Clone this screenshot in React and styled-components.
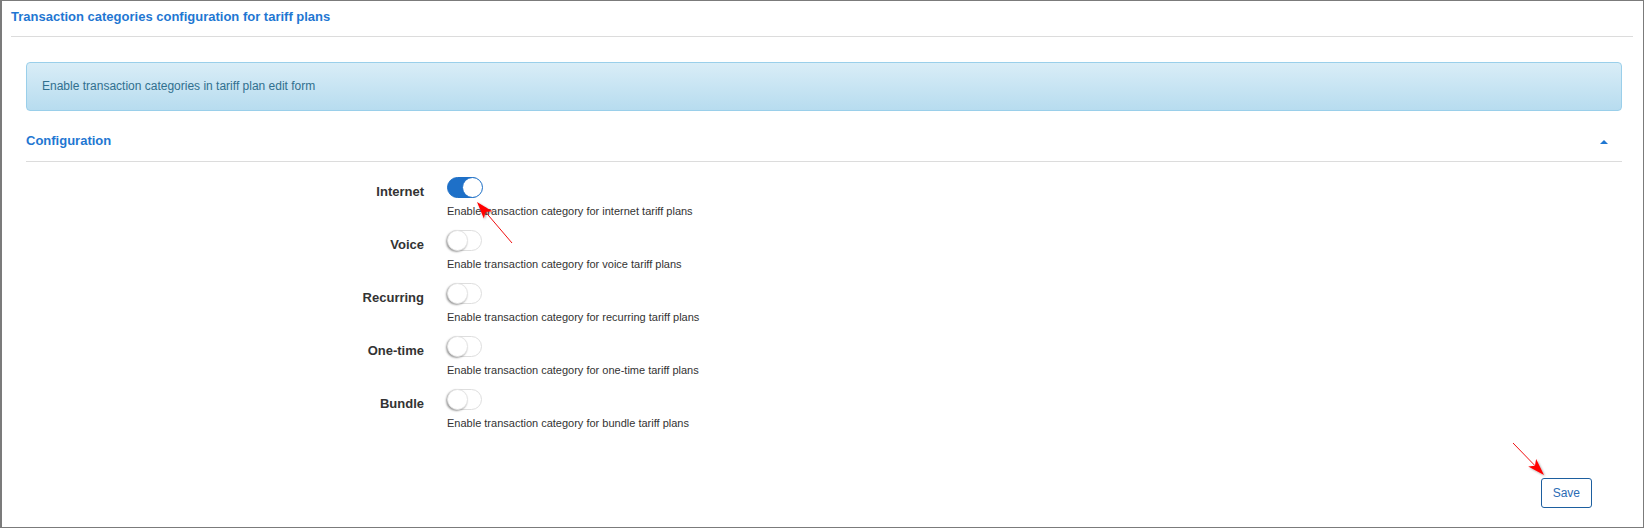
import styled, { createGlobalStyle } from "styled-components";

const GlobalStyle = createGlobalStyle`
  html, body {
    margin: 0;
    padding: 0;
    background: #fff;
  }
  body {
    font-family: "Liberation Sans", Arial, sans-serif;
    color: #333;
  }
  * {
    box-sizing: border-box;
  }
`;

const Frame = styled.div`
  position: relative;
  width: 1644px;
  height: 528px;
  border: 1px solid #7b7b7b;
  border-left-width: 2px;
  padding: 0 10px 0 9px;
  background: #fff;
`;

const PageHeader = styled.div`
  padding: 7px 0 10px;
  border-bottom: 1px solid #dcdcdc;
  color: #1f77d2;
  font-size: 13px;
  line-height: 18px;
  font-weight: bold;
`;

const Body = styled.div`
  padding: 0 11px 0 15px;
`;

const Alert = styled.div`
  margin-top: 25px;
  padding: 15px 15px;
  border: 1px solid #9acfea;
  border-radius: 4px;
  background: linear-gradient(to bottom, #d9edf7 0%, #b7dcef 100%);
  color: #31708f;
  font-size: 12px;
  line-height: 17px;
`;

const SectionHeader = styled.div`
  display: flex;
  align-items: center;
  justify-content: space-between;
  margin-top: 21px;
  padding-bottom: 11px;
  border-bottom: 1px solid #dcdcdc;
`;

const SectionTitle = styled.div`
  color: #1f77d2;
  font-size: 13px;
  line-height: 18px;
  font-weight: bold;
`;

const Caret = styled.span`
  width: 0;
  height: 0;
  margin: 2px 14px 0 0;
  border-left: 4px solid transparent;
  border-right: 4px solid transparent;
  border-bottom: 4px solid #1f77d2;
`;

const Form = styled.div`
  padding-top: 15px;
`;

const Row = styled.div`
  display: grid;
  grid-template-columns: 398px 1fr;
  column-gap: 23px;
  margin-bottom: 12px;
`;

const Label = styled.div`
  text-align: right;
  font-size: 13px;
  font-weight: bold;
  line-height: 21px;
  padding-top: 4px;
  color: #333;
`;

const Field = styled.div`
  display: flex;
  flex-direction: column;
  align-items: flex-start;
`;

const Switch = styled.span`
  position: relative;
  display: inline-block;
  width: 35px;
  height: 21px;
  border-radius: 11px;
  border: 1px solid ${(p) => (p.$on ? "#1d6fc6" : "#dedede")};
  background: ${(p) => (p.$on ? "#1e70c8" : "#fff")};

  &::after {
    content: "";
    position: absolute;
    top: -1px;
    left: ${(p) => (p.$on ? "14px" : "-1px")};
    width: 21px;
    height: 21px;
    border-radius: 50%;
    background: #fff;
    box-sizing: border-box;
    border: 1px solid ${(p) => (p.$on ? "#1d6fc6" : "#e4e4e4")};
    box-shadow: ${(p) =>
      p.$on ? "none" : "-1px 1px 2px rgba(0, 0, 0, 0.4)"};
  }
`;

const Help = styled.div`
  margin-top: 6px;
  font-size: 11px;
  line-height: 14px;
  color: #333;
`;

const Actions = styled.div`
  display: flex;
  justify-content: flex-end;
  padding: 36px 30px 0 0;
`;

const SaveButton = styled.button`
  height: 30px;
  padding: 0 11px;
  border: 1px solid #1d5f9f;
  border-radius: 3px;
  background: #fff;
  color: #2b6cb5;
  font-family: "Liberation Sans", Arial, sans-serif;
  font-size: 12px;
`;

const Annotations = styled.svg`
  position: absolute;
  left: -2px;
  top: -1px;
  pointer-events: none;
`;

const categories = [
  { label: "Internet", key: "internet", on: true },
  { label: "Voice", key: "voice", on: false },
  { label: "Recurring", key: "recurring", on: false },
  { label: "One-time", key: "one-time", on: false },
  { label: "Bundle", key: "bundle", on: false },
];

function Arrow({ x1, y1, x2, y2 }) {
  const dx = x2 - x1;
  const dy = y2 - y1;
  const len = Math.hypot(dx, dy);
  const ux = dx / len;
  const uy = dy / len;
  const bx = x2 - ux * 17;
  const by = y2 - uy * 17;
  const nx = x2 - ux * 13;
  const ny = y2 - uy * 13;
  const px = -uy * 5.5;
  const py = ux * 5.5;
  const head = `${x2},${y2} ${bx + px},${by + py} ${nx},${ny} ${bx - px},${by - py}`;
  return (
    <g>
      <line x1={x1} y1={y1} x2={nx} y2={ny} stroke="#f01010" strokeWidth="1" />
      <polygon points={head} fill="#f00" filter="url(#arrowShadow)" />
    </g>
  );
}

export default function App() {
  return (
    <>
      <GlobalStyle />
      <Frame>
        <PageHeader>Transaction categories configuration for tariff plans</PageHeader>
        <Body>
          <Alert>Enable transaction categories in tariff plan edit form</Alert>
          <SectionHeader>
            <SectionTitle>Configuration</SectionTitle>
            <Caret />
          </SectionHeader>
          <Form>
            {categories.map((c) => (
              <Row key={c.key}>
                <Label>{c.label}</Label>
                <Field>
                  <Switch $on={c.on} />
                  <Help>Enable transaction category for {c.key} tariff plans</Help>
                </Field>
              </Row>
            ))}
          </Form>
          <Actions>
            <SaveButton>Save</SaveButton>
          </Actions>
        </Body>
        <Annotations width="1644" height="528" viewBox="0 0 1644 528">
          <defs>
            <filter id="arrowShadow" x="-50%" y="-50%" width="200%" height="200%">
              <feDropShadow dx="1" dy="1" stdDeviation="1" floodColor="#000" floodOpacity="0.35" />
            </filter>
          </defs>
          <Arrow x1={512} y1={243} x2={477} y2={202} />
          <Arrow x1={1513} y1={443} x2={1544} y2={475} />
        </Annotations>
      </Frame>
    </>
  );
}
